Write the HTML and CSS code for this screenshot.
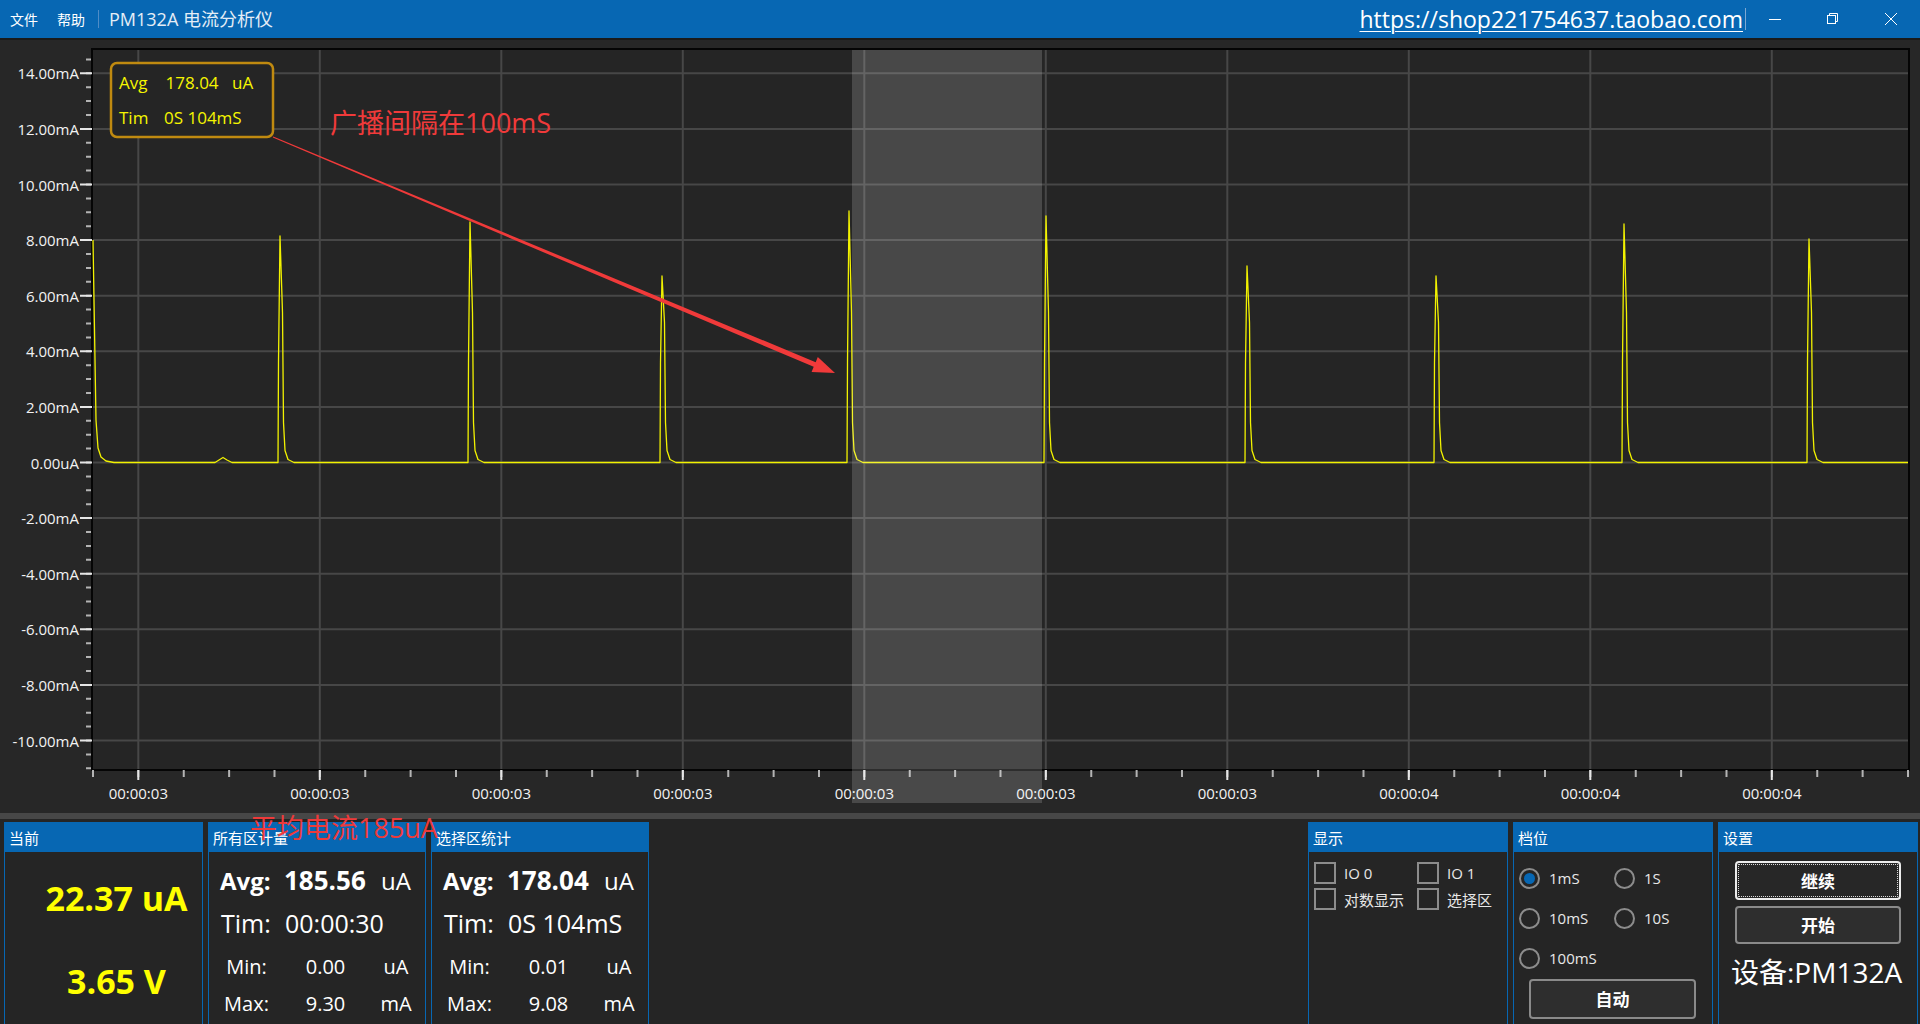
FILE: index.html
```html
<!DOCTYPE html>
<html lang="zh-CN">
<head>
<meta charset="utf-8">
<title>PM132A 电流分析仪</title>
<link rel="stylesheet" href="styles.css">
</head>
<body>
<div class="app">
  <header class="titlebar">
    <nav class="menu"><span>文件</span><span>帮助</span></nav>
    <span class="sep"></span>
    <span class="app-title">PM132A 电流分析仪</span>
    <span class="spacer"></span>
    <a class="shop-link">https://shop221754637.taobao.com</a>
    <span class="caret"></span>
    <div class="win-controls">
      <span class="win-btn"><svg width="14" height="14" viewBox="0 0 14 14"><line x1="1" y1="7.5" x2="13" y2="7.5" stroke="#fff" stroke-width="1"/></svg></span>
      <span class="win-btn"><svg width="14" height="14" viewBox="0 0 14 14" fill="none" stroke="#fff" stroke-width="1"><rect x="1.5" y="3.5" width="8" height="8"/><path d="M3.5 3.5V1.5h8v8h-2"/></svg></span>
      <span class="win-btn"><svg width="14" height="14" viewBox="0 0 14 14" stroke="#fff" stroke-width="1"><line x1="1" y1="1" x2="13" y2="13"/><line x1="13" y1="1" x2="1" y2="13"/></svg></span>
    </div>
  </header>

  <section class="chart">
    <svg class="plot" width="1920" height="775" viewBox="0 38 1920 775">
      <rect x="0" y="38" width="1920" height="2" fill="#1a1a1a"/>
      <rect x="92" y="49" width="1817" height="721" fill="#252525"/>
      <g stroke="#474747" stroke-width="2">
        <line x1="138.3" y1="49" x2="138.3" y2="770"/>
        <line x1="319.8" y1="49" x2="319.8" y2="770"/>
        <line x1="501.3" y1="49" x2="501.3" y2="770"/>
        <line x1="682.8" y1="49" x2="682.8" y2="770"/>
        <line x1="864.3" y1="49" x2="864.3" y2="770"/>
        <line x1="1045.8" y1="49" x2="1045.8" y2="770"/>
        <line x1="1227.3" y1="49" x2="1227.3" y2="770"/>
        <line x1="1408.8" y1="49" x2="1408.8" y2="770"/>
        <line x1="1590.3" y1="49" x2="1590.3" y2="770"/>
        <line x1="1771.8" y1="49" x2="1771.8" y2="770"/>
        <line x1="92" y1="73.3" x2="1909" y2="73.3"/>
        <line x1="92" y1="128.9" x2="1909" y2="128.9"/>
        <line x1="92" y1="184.5" x2="1909" y2="184.5"/>
        <line x1="92" y1="240.1" x2="1909" y2="240.1"/>
        <line x1="92" y1="295.7" x2="1909" y2="295.7"/>
        <line x1="92" y1="351.3" x2="1909" y2="351.3"/>
        <line x1="92" y1="406.9" x2="1909" y2="406.9"/>
        <line x1="92" y1="462.5" x2="1909" y2="462.5"/>
        <line x1="92" y1="518.1" x2="1909" y2="518.1"/>
        <line x1="92" y1="573.7" x2="1909" y2="573.7"/>
        <line x1="92" y1="629.3" x2="1909" y2="629.3"/>
        <line x1="92" y1="684.9" x2="1909" y2="684.9"/>
        <line x1="92" y1="740.5" x2="1909" y2="740.5"/>
      </g>
      <rect x="92" y="49" width="1817" height="721" fill="none" stroke="#050505" stroke-width="2"/>

      <line x1="88.5" y1="58.4" x2="88.5" y2="770" stroke="#b4b4b4" stroke-width="5" stroke-dasharray="2 11.9"/>
      <line x1="86" y1="72.3" x2="86" y2="770" stroke="#e6e6e6" stroke-width="12" stroke-dasharray="2 53.6"/>
      <line x1="92" y1="773.5" x2="1910" y2="773.5" stroke="#b4b4b4" stroke-width="7" stroke-dasharray="2 43.375"/>
      <line x1="137.3" y1="775" x2="1910" y2="775" stroke="#e6e6e6" stroke-width="10" stroke-dasharray="2 179.5"/>

      <g class="ylab">
        <text x="79" y="73.3">14.00mA</text>
        <text x="79" y="128.9">12.00mA</text>
        <text x="79" y="184.5">10.00mA</text>
        <text x="79" y="240.1">8.00mA</text>
        <text x="79" y="295.7">6.00mA</text>
        <text x="79" y="351.3">4.00mA</text>
        <text x="79" y="406.9">2.00mA</text>
        <text x="79" y="462.5">0.00uA</text>
        <text x="79" y="518.1">-2.00mA</text>
        <text x="79" y="573.7">-4.00mA</text>
        <text x="79" y="629.3">-6.00mA</text>
        <text x="79" y="684.9">-8.00mA</text>
        <text x="79" y="740.5">-10.00mA</text>
      </g>
      <g class="xlab">
        <text x="138.3" y="793">00:00:03</text>
        <text x="319.8" y="793">00:00:03</text>
        <text x="501.3" y="793">00:00:03</text>
        <text x="682.8" y="793">00:00:03</text>
        <text x="864.3" y="793">00:00:03</text>
        <text x="1045.8" y="793">00:00:03</text>
        <text x="1227.3" y="793">00:00:03</text>
        <text x="1408.8" y="793">00:00:04</text>
        <text x="1590.3" y="793">00:00:04</text>
        <text x="1771.8" y="793">00:00:04</text>
      </g>

      <path fill="none" stroke="#f2f200" stroke-width="1.3" stroke-linejoin="round" d="M 93 240 L 94.5 330 L 96 420 L 98 448 L 101 457 L 106 461 L 114 462.5
        L 215 462.5 L 219 460 L 223 457.5 L 227 460 L 232 462.5
        L 278 462.5 L 278.5 362.5 L 280 236 L 282.5 312.5 L 283.5 422.5 L 285 450.5 L 288 459.5 L 294 462.5
        L 468 462.5 L 468.5 362.5 L 470 222 L 472.5 312.5 L 473.5 422.5 L 475 450.5 L 478 459.5 L 484 462.5
        L 660 462.5 L 660.5 362.5 L 662 276 L 664.5 322.5 L 665.5 422.5 L 667 450.5 L 670 459.5 L 676 462.5
        L 847 462.5 L 847.5 362.5 L 849 211 L 851.5 312.5 L 852.5 422.5 L 854 450.5 L 857 459.5 L 863 462.5
        L 1044 462.5 L 1044.5 362.5 L 1046 216 L 1048.5 312.5 L 1049.5 422.5 L 1051 450.5 L 1054 459.5 L 1060 462.5
        L 1245 462.5 L 1245.5 362.5 L 1247 266 L 1249.5 322.5 L 1250.5 422.5 L 1252 450.5 L 1255 459.5 L 1261 462.5
        L 1434 462.5 L 1434.5 362.5 L 1436 276 L 1438.5 322.5 L 1439.5 422.5 L 1441 450.5 L 1444 459.5 L 1450 462.5
        L 1622 462.5 L 1622.5 362.5 L 1624 224 L 1626.5 312.5 L 1627.5 422.5 L 1629 450.5 L 1632 459.5 L 1638 462.5
        L 1807 462.5 L 1807.5 362.5 L 1809 239 L 1811.5 312.5 L 1812.5 422.5 L 1814 450.5 L 1817 459.5 L 1823 462.5
        L 1908 462.5"/>

      <rect x="852" y="50" width="190" height="753" fill="rgba(255,255,255,0.16)"/>

      <rect x="111" y="63" width="162" height="74" rx="6" fill="#252525" stroke="#c08a10" stroke-width="2.5"/>
      <g class="anno">
        <text x="119" y="82">Avg</text>
        <text x="165.5" y="82">178.04</text>
        <text x="232" y="82">uA</text>
        <text x="119" y="117">Tim</text>
        <text x="164" y="117">0S 104mS</text>
      </g>

      <polygon fill="#f03a3a" points="272.8,137.5 813.7,366.8 811.6,371.9 835,373 817.8,357.1 815.7,362.2 273.2,136.5"/>
      <text class="note" x="330" y="122">广播间隔在100mS</text>
    </svg>
  </section>

  <div class="splitter"></div>

  <section class="panels">
    <div class="panel w-sm">
      <div class="panel-head">当前</div>
      <div class="panel-body current-body">
        <div class="big-val">22.37 uA</div>
        <div class="big-val second">3.65 V</div>
      </div>
    </div>

    <div class="panel w-md">
      <div class="panel-head">所有区计量</div>
      <div class="panel-body stat-body">
        <div class="stat-row avg"><span>Avg:</span><span class="num">185.56</span><span class="unit">uA</span></div>
        <div class="stat-row tim"><span>Tim:</span><span>00:00:30</span></div>
        <div class="mm-row r-min"><span>Min:</span><span>0.00</span><span>uA</span></div>
        <div class="mm-row r-max"><span>Max:</span><span>9.30</span><span>mA</span></div>
      </div>
    </div>

    <div class="panel w-md">
      <div class="panel-head">选择区统计</div>
      <div class="panel-body stat-body">
        <div class="stat-row avg"><span>Avg:</span><span class="num">178.04</span><span class="unit">uA</span></div>
        <div class="stat-row tim"><span>Tim:</span><span>0S 104mS</span></div>
        <div class="mm-row r-min"><span>Min:</span><span>0.01</span><span>uA</span></div>
        <div class="mm-row r-max"><span>Max:</span><span>9.08</span><span>mA</span></div>
      </div>
    </div>

    <div class="panels-gap"></div>

    <div class="panel w-lg">
      <div class="panel-head">显示</div>
      <div class="panel-body check-body">
        <label class="check"><span class="box"></span><span>IO 0</span></label>
        <label class="check"><span class="box"></span><span>IO 1</span></label>
        <label class="check"><span class="box"></span><span>对数显示</span></label>
        <label class="check"><span class="box"></span><span>选择区</span></label>
      </div>
    </div>

    <div class="panel w-lg">
      <div class="panel-head">档位</div>
      <div class="panel-body radio-body">
        <div class="radio-grid">
          <label class="radio on"><span class="dot"></span><span>1mS</span></label>
          <label class="radio"><span class="dot"></span><span>1S</span></label>
          <label class="radio"><span class="dot"></span><span>10mS</span></label>
          <label class="radio"><span class="dot"></span><span>10S</span></label>
          <label class="radio"><span class="dot"></span><span>100mS</span></label>
        </div>
        <button class="btn auto">自动</button>
      </div>
    </div>

    <div class="panel w-lg">
      <div class="panel-head">设置</div>
      <div class="panel-body set-body">
        <button class="btn focus">继续</button>
        <button class="btn">开始</button>
        <div class="device">设备:PM132A</div>
      </div>
    </div>
  </section>

  <div class="overlay-note">平均电流185uA</div>
</div>
</body>
</html>
```

FILE: styles.css
```css
* { box-sizing: border-box; margin: 0; padding: 0; }

html, body {
  width: 1920px;
  height: 1024px;
  overflow: hidden;
  background: #252525;
}

body {
  font-family: "Open Sans", "Noto Sans CJK SC", sans-serif;
  color: #ffffff;
}

.app {
  position: relative;
  width: 1920px;
  height: 1024px;
  display: flex;
  flex-direction: column;
  background: #262626;
  overflow: hidden;
}

/* ---------- title bar ---------- */
.titlebar {
  height: 38px;
  flex: none;
  background: #0767b3;
  display: flex;
  align-items: center;
  padding-left: 10px;
}

.menu {
  display: flex;
  gap: 19px;
  font-family: "Noto Sans CJK SC", sans-serif;
  font-size: 14px;
  line-height: 20px;
  color: #ffffff;
}

.sep {
  width: 1px;
  height: 18px;
  background: #4f8cc6;
  margin: 0 10px 0 13px;
}

.app-title {
  font-family: "Open Sans", "Noto Sans CJK SC", sans-serif;
  font-size: 18px;
  line-height: 24px;
  color: #e4edf6;
}

.spacer { flex: 1; }

.shop-link {
  font-family: "Open Sans", sans-serif;
  font-size: 23px;
  line-height: 30px;
  color: #ffffff;
  text-decoration: underline;
  text-decoration-thickness: 1px;
  text-underline-offset: 3px;
}

.caret {
  width: 1px;
  height: 22px;
  background: #7ea8d3;
  margin-left: 2px;
}

.win-controls { display: flex; }

.win-btn {
  width: 58px;
  height: 38px;
  display: flex;
  align-items: center;
  justify-content: center;
}

/* ---------- chart ---------- */
.chart {
  height: 775px;
  flex: none;
  background: #272727;
}

.plot { display: block; }

.ylab text {
  font-family: "Open Sans", sans-serif;
  font-size: 15px;
  fill: #f2f2f2;
  text-anchor: end;
  dominant-baseline: central;
}

.xlab text {
  font-family: "Open Sans", sans-serif;
  font-size: 15px;
  fill: #f2f2f2;
  text-anchor: middle;
  dominant-baseline: central;
}

.anno text {
  font-family: "Open Sans", sans-serif;
  font-size: 17px;
  fill: #f5f500;
  dominant-baseline: central;
}

.note {
  font-family: "Open Sans", "Noto Sans CJK SC", sans-serif;
  font-size: 27px;
  fill: #f03a3a;
  dominant-baseline: central;
}

.splitter {
  height: 6px;
  flex: none;
  background: #474747;
}

/* ---------- bottom panels ---------- */
.panels {
  flex: 1;
  display: flex;
  gap: 5px;
  padding: 3px 2px 0 4px;
  background: #252525;
}

.panels-gap { flex: 1; }

.panel {
  display: flex;
  flex-direction: column;
}

.w-sm { width: 199px; }
.w-md { width: 218px; }
.w-lg { width: 200px; }

.panel-head {
  height: 30px;
  flex: none;
  background: #0767b3;
  padding-left: 5px;
  font-family: "Noto Sans CJK SC", sans-serif;
  font-size: 15px;
  line-height: 31px;
  color: #ffffff;
}

.panel-body {
  flex: 1;
  background: #252525;
  border-left: 1px solid #0767b3;
  border-right: 1px solid #0767b3;
}

/* current */
.current-body {
  padding: 24px 0 0 26px;
  text-align: center;
}

.big-val {
  font-family: "Open Sans", sans-serif;
  font-weight: 700;
  font-size: 34px;
  line-height: 44px;
  color: #ffff00;
}

.big-val.second { margin-top: 39px; }

/* stats */
.stat-body { padding-top: 7px; }

.stat-row {
  display: grid;
  grid-template-columns: 64px 97px auto;
  padding-left: 11px;
  align-items: center;
  color: #ffffff;
}

.stat-row.avg {
  height: 42px;
  font-size: 24px;
  font-weight: 700;
}

.stat-row.avg .num { font-size: 26px; }
.stat-row.avg .unit { font-weight: 400; }

.stat-row.tim {
  height: 44px;
  font-size: 25px;
  grid-template-columns: 64px auto;
  padding-left: 12px;
}

.mm-row {
  display: grid;
  grid-template-columns: 75px 83px 58px;
  align-items: center;
  text-align: center;
  font-size: 20px;
  color: #ffffff;
}

.r-min { height: 42px; }
.r-max { height: 32px; }

/* checkboxes */
.check-body {
  display: grid;
  grid-template-columns: 103px 97px;
  grid-auto-rows: 26px;
  padding: 8px 0 0 5px;
  align-content: start;
}

.check {
  display: flex;
  align-items: center;
  gap: 8px;
  font-family: "Open Sans", "Noto Sans CJK SC", sans-serif;
  font-size: 15px;
  color: #e8e8e8;
}

.check .box {
  width: 22px;
  height: 22px;
  border: 2px solid #8c8c8c;
  flex: none;
}

/* radios */
.radio-body { padding: 6px 0 0 5px; }

.radio-grid {
  display: grid;
  grid-template-columns: 95px 80px;
  grid-auto-rows: 40px;
}

.radio {
  display: flex;
  align-items: center;
  gap: 9px;
  font-size: 15px;
  color: #e8e8e8;
}

.radio .dot {
  width: 21px;
  height: 21px;
  border: 2px solid #8c8c8c;
  border-radius: 50%;
  flex: none;
  display: flex;
  align-items: center;
  justify-content: center;
}

.radio.on .dot::after {
  content: "";
  width: 11px;
  height: 11px;
  border-radius: 50%;
  background: #0767b3;
}

.btn {
  display: block;
  background: #2e2e2e;
  border: 2px solid #8a8a8a;
  border-radius: 4px;
  color: #ffffff;
  font-family: "Noto Sans CJK SC", sans-serif;
  font-weight: 700;
  font-size: 17px;
  line-height: 24px;
}

.btn.auto {
  width: 167px;
  height: 40px;
  margin: 1px 0 0 10px;
}

/* settings */
.set-body { padding: 9px 0 0 16px; }

.set-body .btn {
  width: 166px;
  height: 38px;
}

.set-body .btn.focus {
  height: 39px;
  border-color: #ececec;
  background: #272727;
  outline: 1px dotted #d8d8d8;
  outline-offset: -4px;
  margin-bottom: 6px;
}

.device {
  margin-top: 0;
  margin-left: -4px;
  font-family: "Open Sans", "Noto Sans CJK SC", sans-serif;
  font-size: 28px;
  line-height: 56px;
  color: #ffffff;
}

/* overlay annotation over panels */
.overlay-note {
  position: absolute;
  left: 250px;
  top: 814px;
  font-family: "Open Sans", "Noto Sans CJK SC", sans-serif;
  font-size: 27px;
  line-height: 28px;
  color: #ee3a3a;
  white-space: nowrap;
}
```
